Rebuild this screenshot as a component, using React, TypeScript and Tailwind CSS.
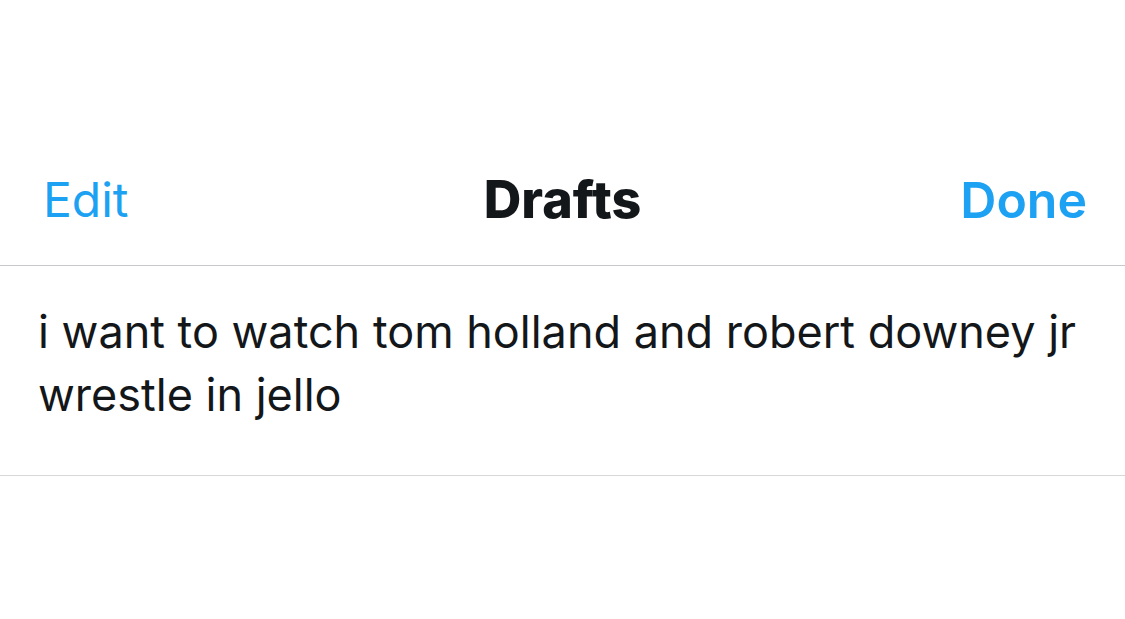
import React from "react";

export default function App() {
  return (
    <div
      className="w-[1125px] h-[619px] bg-white overflow-hidden"
      style={{ fontFamily: "Inter, 'Noto Sans', sans-serif" }}
    >
      <div className="h-[134px]" />
      <div className="h-[132px] grid grid-cols-[1fr_auto_1fr] items-center px-[38px] border-b border-[#c8c7cc]">
        <span className="justify-self-start pl-[5px] text-[48px] leading-none text-[#1da1f2] font-normal">Edit</span>
        <span className="text-[52px] leading-none text-[#14171a] font-extrabold">Drafts</span>
        <span className="justify-self-end text-[50px] leading-none text-[#1da1f2] font-semibold">Done</span>
      </div>
      <div className="border-b border-[#d8d8d8] pl-[38px] pr-[30px] pt-[34px] pb-[49px]">
        <p className="text-[45px] leading-[63px] text-[#14171a] font-normal">
          i want to watch tom holland and robert downey jr wrestle in jello
        </p>
      </div>
    </div>
  );
}
